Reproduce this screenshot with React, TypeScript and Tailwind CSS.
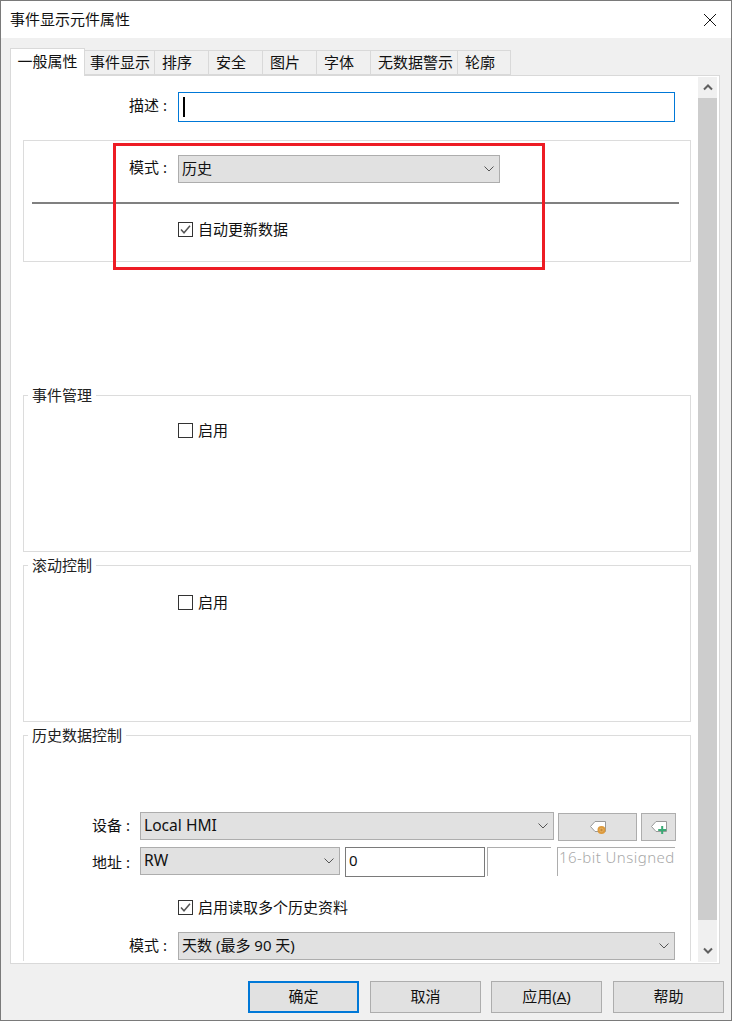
import React from "react";

const FONT = "[font-family:'Noto_Sans','Noto_Sans_CJK_SC',sans-serif]";

function Chevron() {
  return (
    <svg width="12" height="8" viewBox="0 0 12 8" className="shrink-0">
      <path d="M1.5 1.5 L6 6 L10.5 1.5" fill="none" stroke="#555" strokeWidth="1" />
    </svg>
  );
}

function Combo({ text, className, textClass }: { text: string; className: string; textClass?: string }) {
  return (
    <div className={`flex items-center justify-between border border-[#adadad] bg-[#e1e1e1] pl-[3px] pr-[4px] text-[15px] leading-none text-[#111] ${className}`}>
      <span className={textClass ?? "pb-[1px]"}>{text}</span>
      <Chevron />
    </div>
  );
}

function Check({ checked, label, className }: { checked?: boolean; label: string; className: string }) {
  return (
    <div className={`flex items-center text-[15px] leading-none text-[#111] ${className}`}>
      <div className="flex h-[15px] w-[15px] shrink-0 items-center justify-center border border-[#333] bg-white">
        {checked && (
          <svg width="13" height="13" viewBox="0 0 13 13">
            <path d="M2 6.5 L5 9.8 L11 2.8" fill="none" stroke="#555" strokeWidth="1.5" />
          </svg>
        )}
      </div>
      <span className="ml-[5px]">{label}</span>
    </div>
  );
}

function Group({ title, className, children }: { title?: string; className: string; children?: React.ReactNode }) {
  return (
    <div className={`mx-[12px] w-[668px] shrink-0 border border-[#dcdcdc] ${className}`}>
      {title && (
        <div className="-mt-[10px] ml-[4px] h-[20px] w-fit bg-white px-[4px] text-[15px] leading-[18px] text-[#222]">{title}</div>
      )}
      {children}
    </div>
  );
}

function TagIcon({ plus }: { plus?: boolean }) {
  return (
    <svg width="18" height="16" viewBox="0 0 18 16">
      <path d="M16.5 2.5 H6 L1.5 7.5 L6 12.5 H16.5 Z" fill="#fff" stroke="#999" strokeWidth="1" />
      {plus ? (
        <path d="M8.2 11 H16.2 M12.2 7 V15" stroke="#3aaa75" strokeWidth="2" fill="none" />
      ) : (
        <>
          <circle cx="12.5" cy="11" r="4" fill="#dd9a3c" />
          <circle cx="12.5" cy="11" r="1.7" fill="#c98a35" stroke="#f0c27c" strokeWidth="0.6" />
        </>
      )}
    </svg>
  );
}

function Btn({ label, primary, className, children }: { label?: string; primary?: boolean; className?: string; children?: React.ReactNode }) {
  return (
    <div className={`flex h-[32px] w-[111px] items-center justify-center bg-[#e1e1e1] pb-[1px] text-[15px] leading-none text-[#111] ${primary ? "border-2 border-[#0078d7]" : "border border-[#adadad]"} ${className ?? ""}`}>
      {label}
      {children}
    </div>
  );
}

const TABS: [string, string][] = [
  ["事件显示", "w-[70px] pl-[5px]"],
  ["排序", "w-[54px] pl-[7px]"],
  ["安全", "w-[54px] pl-[7px]"],
  ["图片", "w-[54px] pl-[7px]"],
  ["字体", "w-[54px] pl-[7px]"],
  ["无数据警示", "w-[87px] pl-[7px]"],
  ["轮廓", "w-[53px] pl-[7px]"],
];

export default function App() {
  return (
    <div className={`relative flex h-[1021px] w-[732px] flex-col overflow-hidden border border-[#7a7a7a] bg-[#f0f0f0] ${FONT}`}>
      <div className="flex h-[37px] shrink-0 items-center justify-between bg-white pl-[9px] pr-[14px] text-[15px] text-[#111]">
        <span>事件显示元件属性</span>
        <svg width="14" height="14" viewBox="0 0 14 14">
          <path d="M1 1 L13 13 M13 1 L1 13" stroke="#111" strokeWidth="1" fill="none" />
        </svg>
      </div>

      <div className="ml-[9px] mt-[10px] flex h-[27px] shrink-0 items-end">
        <div className="relative z-10 -mb-px flex h-[28px] w-[75px] items-center justify-center border border-b-0 border-[#d9d9d9] bg-white pb-[3px] text-[15px] leading-none text-[#111]">
          一般属性
        </div>
        {TABS.map(([t, w]) => (
          <div key={t} className={`flex h-[25px] items-center border border-l-0 border-[#d9d9d9] bg-[#f0f0f0] text-[15px] leading-none text-[#111] ${w}`}>
            {t}
          </div>
        ))}
      </div>

      <div className="ml-[9px] flex h-[889px] w-[710px] shrink-0 border border-[#d9d9d9] bg-white">
        <div className="flex h-[885px] w-[687px] shrink-0 flex-col overflow-hidden">
          <div className="mt-[16px] flex h-[30px] shrink-0 items-center">
            <span className="w-[167px] pb-[4px] pl-[118px] text-[15px] leading-none text-[#111]">描述 :</span>
            <div className="flex h-[30px] w-[497px] items-center border border-[#0078d7] pl-[4px]">
              <div className="h-[20px] w-[2px] bg-black" />
            </div>
          </div>

          <Group className="mt-[18px] h-[122px]">
            <div className="mt-[14px] flex h-[28px] items-center">
              <span className="w-[154px] pb-[4px] pl-[105px] text-[15px] leading-none text-[#111]">模式 :</span>
              <Combo text="历史" className="h-[28px] w-[322px]" />
            </div>
            <div className="mx-[8px] mt-[19px] h-[2px] w-[647px] bg-[#808080]" />
            <Check checked label="自动更新数据" className="ml-[154px] mt-[18px]" />
          </Group>

          <Group title="事件管理" className="mt-[133px] h-[157px]">
            <Check label="启用" className="ml-[154px] mt-[17px]" />
          </Group>

          <Group title="滚动控制" className="mt-[13px] h-[157px]">
            <Check label="启用" className="ml-[154px] mt-[19px]" />
          </Group>

          <Group title="历史数据控制" className="mt-[13px] h-[240px]">
            <div className="ml-[68px] mt-[66px] flex h-[29px] items-start text-[15px] leading-none text-[#111]">
              <span className="mt-[6px] w-[48px]">设备 :</span>
              <Combo text="Local HMI" textClass="text-[15.6px]" className="h-[28px] w-[414px]" />
              <div className="ml-[4px] mt-[1px] flex h-[28px] w-[79px] items-center justify-center border border-[#adadad] bg-[#e1e1e1]">
                <TagIcon />
              </div>
              <div className="ml-[4px] mt-[1px] flex h-[28px] w-[35px] items-center justify-center border border-[#adadad] bg-[#e1e1e1]">
                <TagIcon plus />
              </div>
            </div>
            <div className="ml-[68px] mt-[6px] flex h-[30px] items-start text-[15px] leading-none text-[#111]">
              <span className="mt-[8px] w-[48px]">地址 :</span>
              <Combo text="RW" textClass="text-[15.6px]" className="h-[28px] w-[200px]" />
              <div className="ml-[5px] flex h-[30px] w-[140px] items-center border border-[#7a7a7a] pb-[3px] pl-[3px]">0</div>
              <div className="ml-[2px] h-[29px] w-[64px] border-l border-t border-[#adadad]" />
              <div className="ml-[6px] h-[29px] w-[118px] whitespace-nowrap border-l border-t border-[#adadad] pl-[1px] pt-[2px] text-[15px] font-light tracking-[0.45px] text-[#a8a8a8]">
                16-bit Unsigned
              </div>
            </div>
            <Check checked label="启用读取多个历史资料" className="ml-[154px] mt-[23px]" />
            <div className="mt-[17px] flex h-[28px] items-center">
              <span className="w-[154px] pb-[2px] pl-[105px] text-[15px] leading-none text-[#111]">模式 :</span>
              <Combo text="天数 (最多 90 天)" className="h-[28px] w-[497px]" />
            </div>
          </Group>
        </div>

        <div className="mt-[1px] flex h-[885px] w-[19px] shrink-0 flex-col bg-[#f0f0f0]">
          <div className="flex h-[21px] items-center justify-center">
            <svg width="10" height="7" viewBox="0 0 10 7">
              <path d="M1 5.5 L5 1.5 L9 5.5" fill="none" stroke="#606060" strokeWidth="2" />
            </svg>
          </div>
          <div className="h-[822px] bg-[#cdcdcd]" />
          <div className="flex flex-1 items-end justify-center pb-[8px]">
            <svg width="10" height="7" viewBox="0 0 10 7">
              <path d="M1 1.5 L5 5.5 L9 1.5" fill="none" stroke="#606060" strokeWidth="2" />
            </svg>
          </div>
        </div>
      </div>

      <div className="ml-[247px] mt-[17px] flex">
        <Btn label="确定" primary />
        <Btn label="取消" className="ml-[11px]" />
        <Btn className="ml-[10px]">
          应用(<span className="underline">A</span>)
        </Btn>
        <Btn label="帮助" className="ml-[11px]" />
      </div>

      <div className="pointer-events-none absolute left-[112px] top-[142px] h-[127px] w-[432px] border-[3px] border-[#ed1c24]" />
    </div>
  );
}
